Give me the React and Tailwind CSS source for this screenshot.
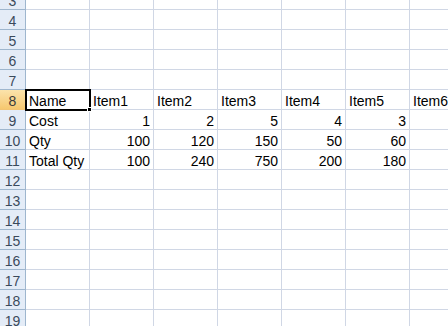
import React from "react";

const rows = [3, 4, 5, 6, 7, 8, 9, 10, 11, 12, 13, 14, 15, 16, 17, 18, 19];
const data = {
  8: [["Name", "l"], ["Item1", "l"], ["Item2", "l"], ["Item3", "l"], ["Item4", "l"], ["Item5", "l"], ["Item6", "l"]],
  9: [["Cost", "l"], ["1", "r"], ["2", "r"], ["5", "r"], ["4", "r"], ["3", "r"], ["", "r"]],
  10: [["Qty", "l"], ["100", "r"], ["120", "r"], ["150", "r"], ["50", "r"], ["60", "r"], ["", "r"]],
  11: [["Total Qty", "l"], ["100", "r"], ["240", "r"], ["750", "r"], ["200", "r"], ["180", "r"], ["", "r"]],
};

export default function App() {
  return (
    <div
      className="relative w-[448px] h-[326px] overflow-hidden bg-white"
      style={{ fontFamily: '"Liberation Sans", Arial, sans-serif' }}
    >
      <div className="-mt-[10px] flex flex-col">
        {rows.map((r) => {
          const cells = data[r] || Array.from({ length: 7 }, () => ["", "l"]);
          const sel = r === 8;
          return (
            <div key={r} className="flex h-[20px] shrink-0">
              <div
                className={
                  "w-[26px] shrink-0 border-r border-b flex items-end justify-center pb-[1px] text-[14px] leading-none " +
                  (sel
                    ? "bg-gradient-to-b from-[#fbe3ab] to-[#f6c86f] border-r-[#f29536] border-b-[#f2c474] text-[#3b3b3b]"
                    : "bg-[#e4ecf7] border-r-[#9eb6ce] border-b-[#9eb6ce] text-[#3b4a5b]")
                }
              >
                {r}
              </div>
              {cells.map(([t, a], i) => (
                <div
                  key={i}
                  className={
                    "w-[64px] shrink-0 border-r border-b border-[#d0d7e5] flex items-end pb-[1px] text-[14px] leading-none text-black whitespace-nowrap " +
                    (a === "r" ? "justify-end pr-[3px]" : "pl-[3px]")
                  }
                >
                  {t}
                </div>
              ))}
            </div>
          );
        })}
      </div>
      <div className="absolute left-[25px] top-[89px] w-[66px] h-[22px] border-2 border-black pointer-events-none" />
      <div className="absolute left-[87px] top-[107px] w-[5px] h-[5px] bg-black border border-white" />
    </div>
  );
}
